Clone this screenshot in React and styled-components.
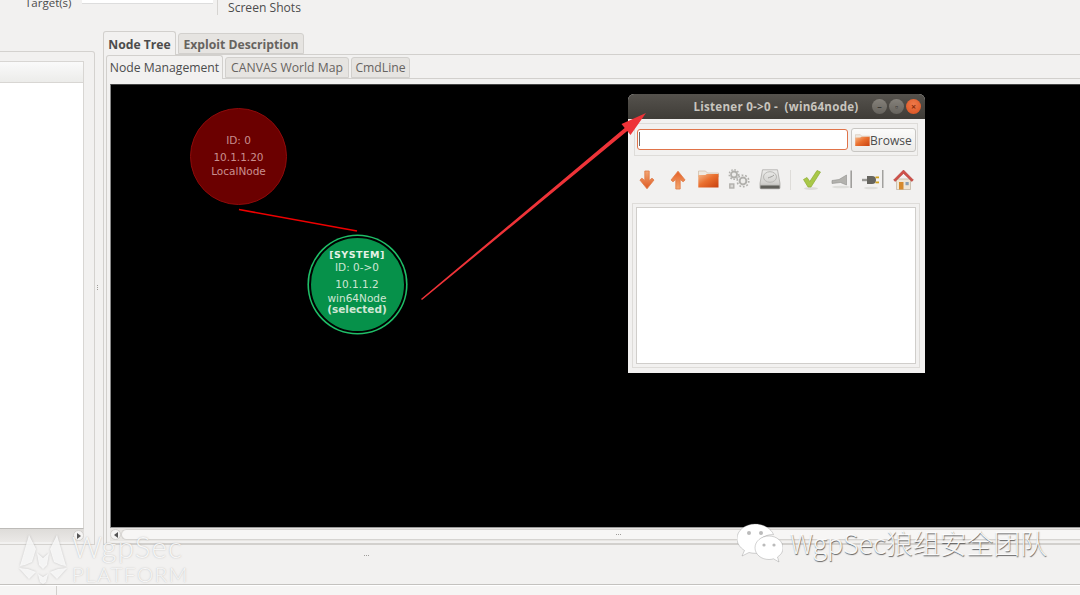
import React from "react";
import styled, { createGlobalStyle } from "styled-components";

const Global = createGlobalStyle`
  html, body { margin: 0; padding: 0; background: #f2f1f0; }
  * { box-sizing: border-box; }
  #root { width: 1080px; height: 595px; overflow: hidden; }
`;
const ui = `"Open Sans", "Noto Sans", "Liberation Sans", sans-serif`;

const Page = styled.div`
  position: relative; width: 1080px; height: 595px; overflow: hidden;
  display: flex; flex-direction: column; background: #f2f1f0;
  font-family: ${ui}; color: #4c4c4c; font-size: 12px;
`;
const TopStrip = styled.div`
  height: 30px; flex: none; display: flex; align-items: flex-start;
`;
const TargetLabel = styled.span`
  margin: -4px 0 0 25px; width: 57px; font-size: 11.5px; line-height: 14px; color: #4c4c4c;
`;
const TargetInput = styled.div`
  width: 131px; height: 4px; background: #fff; border-bottom: 1px solid #ddd;
`;
const ShotsColumn = styled.div`
  margin-left: 4px; height: 15px; border-left: 1px solid #d6d4d1; padding: 0 0 0 10px;
`;
const ShotsLabel = styled.span`
  display: block; font-size: 12.1px; line-height: 15px; white-space: nowrap;
`;
const Main = styled.div`
  height: 515px; flex: none; display: flex;
`;
const LeftPane = styled.div`
  width: 95px; flex: none; margin-top: 21px; height: 494px;
  border: 1px solid #d4d2cf; border-left: 0; border-radius: 0 3px 0 0;
  padding: 9px 10px 0 0; display: flex; flex-direction: column;
`;
const TreeHeader = styled.div`
  height: 22px; flex: none; background: linear-gradient(#fafafa, #ececea);
  border: 1px solid #d8d6d3; border-left: 0;
`;
const TreeBody = styled.div`
  height: 446px; flex: none; background: #fff; border-right: 1px solid #d8d6d3; border-bottom: 1px solid #bdbbb8;
`;
const HScroll = styled.div`
  height: 13px; flex: none; display: flex; align-items: center;
  background: ${p => p.$track || "linear-gradient(#dedcd9, #ebe9e7)"};
  justify-content: ${p => p.$end ? "flex-end" : "flex-start"};
`;
const ArrowBtn = styled.span`
  width: 11px; height: 11px; border-radius: 50%; background: #f6f5f4; border: 1px solid #d4d2cf;
  flex: none; display: flex; align-items: center; justify-content: center;
  &::after {
    content: ""; border: 3px solid transparent;
    ${p => p.$dir === "right"
      ? "border-left: 4px solid #555; margin-left: 3px;"
      : "border-right: 4px solid #555; margin-right: 3px;"}
  }
`;
const Thumb = styled.div`
  flex: 1; height: 11px; border-radius: 6px 0 0 6px; background: #f7f6f5;
  border: 1px solid #d6d4d1; border-right: 0; display: flex; justify-content: center; align-items: center;
  padding-left: 34px;
`;
const Dots = styled.span`
  display: flex; gap: 1px; flex-direction: ${p => p.$col ? "column" : "row"};
  & > i { width: 1px; height: 1px; background: #a09e9b; display: block; }
`;
const VHandle = styled.div`
  width: 8px; flex: none; display: flex; align-items: center; justify-content: center; padding-right: 4px;
`;
const RightColumn = styled.div`
  flex: 1; padding-top: 1px; display: flex; flex-direction: column; min-width: 0;
`;
const OuterTabs = styled.div`
  height: 23px; flex: none; display: flex; align-items: flex-end; gap: 2px; position: relative; z-index: 1;
`;
const OuterTab = styled.div`
  height: ${p => p.$active ? 24 : 21}px; font-weight: 700; font-size: 12.2px; padding-top: 1px;
  border: 1px solid #d2d0cd; border-bottom: ${p => p.$active ? "0" : "1px solid #d2d0cd"};
  border-radius: 3px 3px 0 0; background: ${p => p.$active ? "#f2f1f0" : "#e6e4e1"};
  color: ${p => p.$active ? "#4c4c4c" : "#66635f"};
  display: flex; align-items: center; white-space: nowrap; width: ${p => p.$w}px; justify-content: center;
  margin-bottom: ${p => p.$active ? -1 : 0}px;
`;
const OuterPanel = styled.div`
  height: 491px; flex: none; border: 1px solid #d2d0cd; border-right: 0; padding: 1px 0 0 2px;
  display: flex; flex-direction: column;
`;
const InnerTabs = styled.div`
  height: 22px; flex: none; display: flex; align-items: flex-end; gap: 2px; position: relative; z-index: 1;
`;
const InnerTab = styled.div`
  height: ${p => p.$active ? 24 : 21}px; font-size: 12.2px; white-space: nowrap;
  border: 1px solid #d2d0cd; border-bottom: ${p => p.$active ? "0" : "1px solid #d2d0cd"};
  border-radius: 3px 3px 0 0; background: ${p => p.$active ? "#f2f1f0" : "#e6e4e1"};
  color: ${p => p.$active ? "#4c4c4c" : "#66635f"}; width: ${p => p.$w}px;
  display: flex; align-items: center; justify-content: center;
  margin-bottom: ${p => p.$active ? -1 : 0}px;
`;
const InnerPanel = styled.div`
  height: 466px; flex: none; border: 1px solid #d2d0cd; border-right: 0; padding: 5px 0 0 3px;
  display: flex; flex-direction: column;
`;
const Canvas = styled.div`
  height: 444px; flex: none; background: #000; position: relative; border-left: 1px solid #888; border-top: 1px solid #444; border-bottom: 1px solid #999;
`;
const Circle = styled.div`
  position: absolute; left: ${p => p.$x - 111}px; top: ${p => p.$y - 85}px;
  width: ${p => p.$d}px; height: ${p => p.$d}px; border-radius: 50%;
  background: ${p => p.$bg}; border: ${p => p.$border}; box-shadow: ${p => p.$ring || "none"};
  color: ${p => p.$fg}; display: flex; flex-direction: column; align-items: center; padding-top: ${p => p.$pad}px;
  font-family: "DejaVu Sans", sans-serif; font-size: 10.5px; line-height: 13px; text-align: center;
`;
const NodeLine = styled.span`
  display: block; white-space: nowrap; margin-top: ${p => p.$gap || 0}px;
  font-weight: ${p => p.$bold ? 700 : 400}; font-size: ${p => p.$size || 10.5}px; letter-spacing: ${p => p.$sp || 0}px;
  color: ${p => p.$c || "inherit"};
`;
const Overlay = styled.svg`
  position: absolute; left: 0; top: 0; pointer-events: none; z-index: 3;
`;
const ListenerWindow = styled.div`
  position: absolute; left: 628px; top: 94px; width: 297px; height: 279px; background: #f2f1f0;
  border-radius: 6px 6px 0 0; display: flex; flex-direction: column; z-index: 2;
`;
const TitleBar = styled.div`
  height: 25px; flex: none; background: linear-gradient(#55524d, #3f3c37); border-radius: 6px 6px 0 0;
  display: flex; align-items: center; padding: 0 4px 0 65px;
`;
const TitleText = styled.span`
  width: 166px; font-weight: 700; font-size: 11.6px; color: #c8c5bf; white-space: pre; text-align: center; letter-spacing: .25px;
`;
const WinButtons = styled.div`
  margin-left: auto; display: flex; gap: 2px;
`;
const WinBtn = styled.span`
  width: 15px; height: 15px; border-radius: 50%; display: flex; align-items: center; justify-content: center;
  background: ${p => p.$close ? "radial-gradient(circle at 50% 35%, #ef7a4a, #d9501e)" : "linear-gradient(#85817a, #66635d)"};
  font-size: 9px; line-height: 1; color: ${p => p.$close ? "#8a2d0c" : "#3a3835"}; font-weight: 700;
`;
const PathFrame = styled.div`
  margin: 4px 7px 0 6px; height: 33px; flex: none; border: 1px solid #dedcd9; padding: 4px 1px 0 2px; display: flex; gap: 3px; align-items: flex-start;
`;
const PathInput = styled.div`
  width: 211px; height: 21px; margin-top: 1px; background: #fff; border: 1.5px solid #e0744a; border-radius: 3px; padding: 2px 1px;
  &::before { content: ""; display: block; width: 1px; height: 14px; background: #6b6b6b; }
`;
const BrowseBtn = styled.div`
  width: 65px; height: 24px; border: 1px solid #c8c6c3; border-radius: 3px; background: linear-gradient(#fbfbfa, #ecebe9);
  display: flex; align-items: center; padding-left: 3px; font-size: 12px; color: #4c4c4c;
`;
const Toolbar = styled.div`
  height: 47px; flex: none; display: flex; align-items: center; padding: 0 0 0 4px;
`;
const ToolSlot = styled.div`
  width: 30.7px; height: 24px; flex: none; display: flex; align-items: center; justify-content: center;
`;
const ToolSep = styled.span`
  width: 1px; height: 20px; background: #dedcd9; margin: 0 5px; flex: none;
`;
const ListFrame = styled.div`
  margin: 0 5px 0 4px; height: 165px; flex: none; border: 1px solid #dedcd9; padding: 3px;
`;
const ListBody = styled.div`
  height: 100%; width: 100%; background: #fff; border: 1px solid #d0cecb;
`;
const BottomArea = styled.div`
  flex: 1; display: flex; flex-direction: column;
`;
const Splitter = styled.div`
  height: 40px; flex: none; display: flex; align-items: flex-start; justify-content: center; padding: 10px 348px 0 0;
  border-bottom: 1px solid #c4c2bf;
`;
const StatusBar = styled.div`
  flex: 1; display: flex; background: #f6f5f4; border-top: 1px solid #fff;
`;
const StatusCell = styled.div`
  width: 57px; border-right: 1px solid #d2d0cd;
`;
const WatermarkLeft = styled.div`
  position: absolute; left: 18px; top: 534px; display: flex; gap: 4px; z-index: 4; color: rgba(255,255,255,.85);
`;
const WmText = styled.div`
  display: flex; flex-direction: column; font-family: "Lato", "Liberation Sans", sans-serif; font-weight: 300;
`;
const WmTitle = styled.span`
  font-size: 29.5px; line-height: 26px; height: 30px; letter-spacing: 1.1px; text-shadow: 0 0 1.5px rgba(130,130,130,.55);
`;
const WmSub = styled.span`
  font-size: 20.5px; line-height: 20px; letter-spacing: 1.5px; text-shadow: 0 0 1.5px rgba(130,130,130,.55);
`;
const WatermarkRight = styled.div`
  position: absolute; left: 737px; top: 523px; display: flex; gap: 7px; align-items: flex-start; z-index: 4;
`;
const WmBrand = styled.span`
  margin-top: 1px; font-family: "Noto Sans CJK SC", "Noto Sans", sans-serif; font-weight: 300; font-size: 27px; line-height: 38px;
  letter-spacing: -.2px; color: rgba(255,255,255,.92); white-space: nowrap;
  text-shadow: 0.5px 0.5px 1px rgba(60,60,60,.8);
`;

const Grip = ({ col, n = 3 }) => (
  <Dots $col={col}>{Array.from({ length: n }, (_, i) => <i key={i} />)}</Dots>
);

const Folder = ({ s = 21 }) => (
  <svg width={s} height={s * 0.86} viewBox="0 0 21 18">
    <defs>
      <linearGradient id="fg" x1="0" y1="0" x2="1" y2="1">
        <stop offset="0" stopColor="#f4b98c" /><stop offset=".45" stopColor="#ea702f" /><stop offset="1" stopColor="#c8400e" />
      </linearGradient>
    </defs>
    <path d="M.5 1h7l2 2h11v4H.5z" fill="#efe9e0" stroke="#cdb9a4" strokeWidth=".7" />
    <path d="M.3 5l7 0 1.500-1H20.500v13.500H.3z" fill="url(#fg)" />
  </svg>
);
const Arrow = ({ up }) => (
  <svg width="16" height="20" viewBox="0 0 16 20">
    <defs>
      <linearGradient id={up ? "agu" : "agd"} x1="0" y1="0" x2="0" y2="1">
        <stop offset="0" stopColor={up ? "#f2a871" : "#f3a674"} /><stop offset="1" stopColor={up ? "#e55f26" : "#de5a22"} />
      </linearGradient>
    </defs>
    <g transform={up ? "rotate(180 8 10)" : undefined}>
      <path d="M5.800 1h4.400v9.500l2.800-2.300 2 1.800L8 18.800.9 10l2-1.800 2.900 2.300z" fill={`url(#${up ? "agu" : "agd"})`} stroke="#e07a45" strokeWidth=".8" strokeLinejoin="round" />
    </g>
  </svg>
);
const Gears = () => (
  <svg width="22" height="21" viewBox="0 0 22 21" fill="none" stroke="#b1b0ac">
    <circle cx="6" cy="5.500" r="3" strokeWidth="1.800" fill="#eeedeb" />
    <circle cx="6" cy="5.500" r="4.800" strokeWidth="1.400" strokeDasharray="1.600 1.600" />
    <circle cx="15" cy="12" r="3.400" strokeWidth="2" fill="#eeedeb" />
    <circle cx="15" cy="12" r="5.800" strokeWidth="1.600" strokeDasharray="1.800 1.800" />
    <rect x="1.800" y="15" width="4" height="4" strokeWidth="1.400" fill="#d9d8d5" />
  </svg>
);
const Disk = () => (
  <svg width="22" height="21" viewBox="0 0 22 21">
    <defs>
      <linearGradient id="dg" x1="0" y1="0" x2="0" y2="1">
        <stop offset="0" stopColor="#ececea" /><stop offset=".7" stopColor="#d2d1ce" /><stop offset="1" stopColor="#a5a4a1" />
      </linearGradient>
    </defs>
    <path d="M3.500 .8h15l2.500 13.500v4.500a1 1 0 0 1-1 1H2a1 1 0 0 1-1-1v-4.500z" fill="url(#dg)" stroke="#a3a29f" strokeWidth=".7" />
    <ellipse cx="11" cy="8" rx="6.500" ry="5.300" fill="none" stroke="#b8b7b4" strokeWidth="1" />
    <path d="M9 9c2-1 4-1 6-3" stroke="#9f9e9b" fill="none" strokeWidth="1" />
    <rect x="1.500" y="16.500" width="19" height="3" fill="#5f5e59" />
  </svg>
);
const Check = () => (
  <svg width="20" height="22" viewBox="0 0 20 22">
    <ellipse cx="9" cy="19.500" rx="7" ry="1.500" fill="#dcdbd8" />
    <path d="M1.500 10.500l3.500-2 2.800 4L15 1.500l3.500 1.500L9 18H6z" fill="#a9c848" stroke="#8cab32" strokeWidth=".7" strokeLinejoin="round" />
  </svg>
);
const PlugOut = () => (
  <svg width="22" height="22" viewBox="0 0 22 22">
    <ellipse cx="10" cy="18" rx="9" ry="1.300" fill="#dededb" />
    <path d="M1 11.500l7-1 7.500-4.500v10l-6-2.500L1 14.500z" fill="#b3b2ae" stroke="#8f8e8b" strokeWidth=".6" />
    <rect x="19.500" y="1.500" width="1.300" height="17.500" fill="#8c8b88" />
  </svg>
);
const PlugIn = () => (
  <svg width="24" height="22" viewBox="0 0 24 22">
    <ellipse cx="10" cy="19" rx="7" ry="1.300" fill="#dededb" />
    <rect x="1" y="9.800" width="5" height="2.400" fill="#9a9995" />
    <path d="M6 7h5a4 4 0 0 1 4 4 4 4 0 0 1-4 4H6z" fill="#66655f" />
    <rect x="14.500" y="7.500" width="3.500" height="1.800" fill="#d1a21c" />
    <rect x="14.500" y="12.500" width="3.500" height="1.800" fill="#d1a21c" />
    <rect x="21" y="1" width="1.500" height="18" fill="#a2a19e" />
  </svg>
);
const House = () => (
  <svg width="21" height="22" viewBox="0 0 21 22">
    <path d="M3.500 10h14v10.500h-14z" fill="#efe6d6" stroke="#b6a68f" strokeWidth=".6" />
    <rect x="6" y="13" width="4.500" height="7.500" fill="#d68a2c" />
    <rect x="12.500" y="13" width="3.200" height="3.200" fill="#8ba0b3" />
    <path d="M10.500 1L.6 11l1.600 1.400 8.300-8 8.300 8 1.600-1.400z" fill="#d0514a" stroke="#a8332a" strokeWidth=".5" strokeLinejoin="round" />
  </svg>
);
const Wolf = () => (
  <svg width="50" height="51" viewBox="0 0 50 51" style={{ filter: "drop-shadow(0 0 1px rgba(130,130,130,.5))" }}>
    <g fill="rgba(255,255,255,.8)">
      <path d="M11 1l7 14-4 13-7 3-5 1z" />
      <path d="M39 1l-7 14 4 13 7 3 5 1z" />
      <path d="M19 19l6 5 6-5 -2 12-4 4-4-4z" />
      <path d="M1 34l9 1 8 3-7 7z" />
      <path d="M49 34l-9 1-8 3 7 7z" />
      <path d="M20 40l5 3 5-3-2 8-3 2-3-2z" />
    </g>
  </svg>
);
const WeChat = () => (
  <svg width="46" height="40" viewBox="0 0 46 40">
    <g stroke="rgba(120,120,120,.55)" strokeWidth=".6">
      <path d="M18 1C8 1 0 7.500 0 15.500c0 5 3 9 7.500 12L5 33l7-3.500c2 .5 4 .8 6 .8 1 0 2 0 2.500-.2-1-2-1-4-1-5 0-7.500 7-13.500 16-13.500h1C34.500 6 27 1 18 1z" fill="#fff" />
      <path d="M32 13c-7.700 0-14 5.200-14 11.800S24.300 36.500 32 36.500c1.500 0 3.200-.3 4.500-.7l5.500 3.200-1.500-5c3.500-2.300 5.500-5 5.500-9 0-6.600-6.300-12-14-12z" fill="#fff" />
    </g>
    <circle cx="12" cy="10" r="2" fill="#bbb" /><circle cx="24" cy="10" r="2" fill="#bbb" />
    <circle cx="27" cy="22" r="1.600" fill="#bbb" /><circle cx="37" cy="22" r="1.600" fill="#bbb" />
  </svg>
);

export default function App() {
  return (
    <Page>
      <Global />
      <TopStrip>
        <TargetLabel>Target(s)</TargetLabel>
        <TargetInput />
        <ShotsColumn><ShotsLabel>Screen Shots</ShotsLabel></ShotsColumn>
      </TopStrip>
      <Main>
        <LeftPane>
          <TreeHeader />
          <TreeBody />
          <HScroll $end><ArrowBtn $dir="right" /></HScroll>
        </LeftPane>
        <VHandle><Grip col n={3} /></VHandle>
        <RightColumn>
          <OuterTabs>
            <OuterTab $active $w={73}>Node Tree</OuterTab>
            <OuterTab $w={126}>Exploit Description</OuterTab>
          </OuterTabs>
          <OuterPanel>
            <InnerTabs>
              <InnerTab $active $w={117}>Node Management</InnerTab>
              <InnerTab $w={124}>CANVAS World Map</InnerTab>
              <InnerTab $w={59}>CmdLine</InnerTab>
            </InnerTabs>
            <InnerPanel>
              <Canvas>
                <Circle $x={190} $y={108} $d={97} $bg="#6b0000" $border="1.5px solid #8f0a0a" $fg="#c98f8f" $pad={25}>
                  <NodeLine>ID: 0</NodeLine>
                  <NodeLine $gap={4}>10.1.1.20</NodeLine>
                  <NodeLine $gap={1}>LocalNode</NodeLine>
                </Circle>
                <Circle $x={308.5} $y={235.5} $d={97} $bg="#06914a" $border="2px solid #000" $ring="0 0 0 1.6px #1fbf68" $fg="#cfe6d4" $pad={10}>
                  <NodeLine $bold $size={9.5} $sp={.5} $c="#e4f2e6">[SYSTEM]</NodeLine>
                  <NodeLine>ID: 0-&gt;0</NodeLine>
                  <NodeLine $gap={4}>10.1.1.2</NodeLine>
                  <NodeLine $gap={1}>win64Node</NodeLine>
                  <NodeLine $bold $gap={-2}>(selected)</NodeLine>
                </Circle>
              </Canvas>
              <HScroll $track="#e8e6e3">
                <ArrowBtn $dir="left" />
                <Thumb><Grip n={3} /></Thumb>
              </HScroll>
            </InnerPanel>
          </OuterPanel>
        </RightColumn>
      </Main>
      <BottomArea>
        <Splitter><Grip n={3} /></Splitter>
        <StatusBar><StatusCell /></StatusBar>
      </BottomArea>

      <ListenerWindow>
        <TitleBar>
          <TitleText>Listener 0-&gt;0 -  (win64node)</TitleText>
          <WinButtons>
            <WinBtn>–</WinBtn>
            <WinBtn>▫</WinBtn>
            <WinBtn $close>×</WinBtn>
          </WinButtons>
        </TitleBar>
        <PathFrame>
          <PathInput />
          <BrowseBtn><Folder s={15} />Browse</BrowseBtn>
        </PathFrame>
        <Toolbar>
          <ToolSlot><Arrow /></ToolSlot>
          <ToolSlot><Arrow up /></ToolSlot>
          <ToolSlot><Folder /></ToolSlot>
          <ToolSlot><Gears /></ToolSlot>
          <ToolSlot><Disk /></ToolSlot>
          <ToolSep />
          <ToolSlot><Check /></ToolSlot>
          <ToolSlot><PlugOut /></ToolSlot>
          <ToolSlot><PlugIn /></ToolSlot>
          <ToolSlot><House /></ToolSlot>
        </Toolbar>
        <ListFrame><ListBody /></ListFrame>
      </ListenerWindow>

      <Overlay width="1080" height="595">
        <line x1="239" y1="209.500" x2="357" y2="231" stroke="#e00" strokeWidth="1.600" />
        <polygon points="421,299 624.700,128 621.500,124 646,113 630.500,135 627.300,131.100 422,300" fill="#ee3338" />
      </Overlay>

      <WatermarkLeft>
        <Wolf />
        <WmText>
          <WmTitle>WgpSec</WmTitle>
          <WmSub>PLATFORM</WmSub>
        </WmText>
      </WatermarkLeft>
      <WatermarkRight>
        <WeChat />
        <WmBrand>WgpSec狼组安全团队</WmBrand>
      </WatermarkRight>
    </Page>
  );
}
